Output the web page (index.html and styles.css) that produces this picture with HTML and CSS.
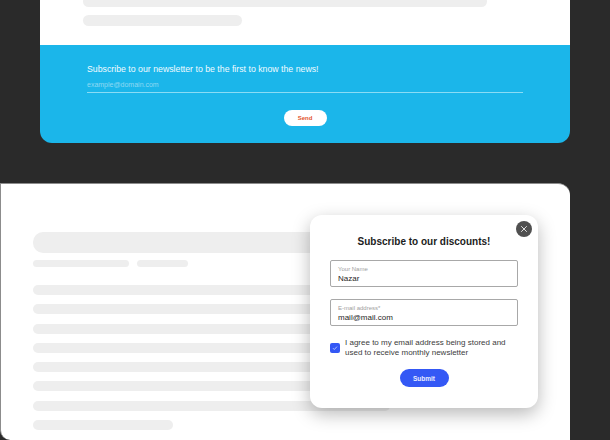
FILE: index.html
```html
<!DOCTYPE html>
<html lang="en">
<head>
    <meta charset="UTF-8">
    <title>Newsletter forms</title>
    <link rel="stylesheet" href="styles.css">
</head>
<body>

<div class="card-top">
    <div class="article-end">
        <div class="bar bar-long"></div>
        <div class="bar bar-short"></div>
    </div>
    <div class="newsletter">
        <p class="newsletter-text">Subscribe to our newsletter to be the first to know the news!</p>
        <div class="newsletter-input">example@domain.com</div>
        <button class="send-button">Send</button>
    </div>
</div>

<div class="card-bottom">
    <div class="hero-bar"></div>
    <div class="meta">
        <div class="meta-bar meta-first"></div>
        <div class="meta-bar meta-second"></div>
    </div>
    <div class="lines">
        <div class="line"></div>
        <div class="line"></div>
        <div class="line"></div>
        <div class="line"></div>
        <div class="line"></div>
        <div class="line"></div>
        <div class="line"></div>
        <div class="line line-last"></div>
    </div>

    <div class="popup">
        <div class="popup-close">
            <svg width="10" height="10" viewBox="0 0 10 10"><path d="M2.2 2.2l5.6 5.6M7.8 2.2l-5.6 5.6" stroke="#e0e0e0" stroke-width="1" fill="none"/></svg>
        </div>
        <h2>Subscribe to our discounts!</h2>
        <div class="field">
            <span class="field-label">Your Name</span>
            <span class="field-value">Nazar</span>
        </div>
        <div class="field">
            <span class="field-label">E-mail address*</span>
            <span class="field-value">mail@mail.com</span>
        </div>
        <div class="agree">
            <div class="checkbox">
                <svg width="6" height="6" viewBox="0 0 6 6"><path d="M1 3.2l1.3 1.3L5 1.6" stroke="#cfd8ff" stroke-width="0.8" fill="none"/></svg>
            </div>
            <p>I agree to my email address being stored and used to receive monthly newsletter</p>
        </div>
        <button class="submit-button">Submit</button>
    </div>
</div>

</body>
</html>
```

FILE: styles.css
```css
html, body {
    height: 440px;
}
body {
    margin: 0;
    overflow: hidden;
    background-color: #2a2a2a;
    font-family: "Liberation Sans", Arial, sans-serif;
}
.card-top {
    width: 530px;
    margin-left: 40px;
}
.article-end {
    height: 45px;
    padding-left: 43px;
    background: white;
    overflow: hidden;
}
.bar {
    height: 11px;
    background: #eeeeee;
    border-radius: 6px;
}
.bar-long {
    width: 404px;
    margin-top: -4px;
}
.bar-short {
    width: 159px;
    margin-top: 8px;
}
.newsletter {
    height: 98px;
    padding: 19px 47px 0;
    box-sizing: border-box;
    background: #1bb6ea;
    border-radius: 0 0 12px 12px;
    text-align: center;
}
.newsletter-text {
    margin: 0;
    color: #f2fbff;
    font-size: 8.75px;
    line-height: 11px;
    text-align: left;
}
.newsletter-input {
    height: 12px;
    margin-top: 5px;
    border-bottom: 1px solid #8adcf5;
    color: #8fd9f3;
    font-size: 7px;
    line-height: 10px;
    text-align: left;
}
.send-button {
    display: block;
    width: 43px;
    height: 16px;
    margin: 17px auto 0;
    padding: 0;
    border: none;
    border-radius: 8px;
    background: white;
    color: #e2552e;
    font-family: inherit;
    font-size: 6px;
    font-weight: bold;
}
.card-bottom {
    position: relative;
    width: 570px;
    height: 257px;
    margin-top: 40px;
    padding: 48px 0 0 33px;
    box-sizing: border-box;
    background: white;
    border-top: 1px solid #8c8c8c;
    border-left: 1px solid #8c8c8c;
    border-radius: 0 12px 0 10px;
}
.hero-bar {
    width: 357px;
    height: 21px;
    margin-left: -1px;
    background: #eeeeee;
    border-radius: 10px;
}
.meta {
    display: flex;
    gap: 8px;
    margin: 7px 0 0 -1px;
}
.meta-bar {
    height: 7px;
    background: #eeeeee;
    border-radius: 4px;
}
.meta-first {
    width: 96px;
}
.meta-second {
    width: 51px;
}
.lines {
    display: flex;
    flex-direction: column;
    gap: 9.3px;
    margin: 18px 0 0 -1px;
}
.line {
    width: 357px;
    height: 10px;
    background: #eeeeee;
    border-radius: 5px;
}
.line-last {
    width: 140px;
}
.popup {
    position: absolute;
    left: 309px;
    top: 31px;
    width: 228px;
    height: 193px;
    padding: 21px 20px 0;
    box-sizing: border-box;
    background: white;
    border-radius: 12px;
    box-shadow: 0 6px 18px rgba(0, 0, 0, 0.28);
}
.popup-close {
    position: absolute;
    top: 6px;
    right: 6px;
    display: flex;
    align-items: center;
    justify-content: center;
    width: 16px;
    height: 16px;
    background: #505050;
    border-radius: 50%;
}
.popup h2 {
    margin: 0 0 12px;
    color: #1c1c1c;
    font-size: 10px;
    line-height: 12px;
    text-align: center;
}
.field {
    display: flex;
    flex-direction: column;
    height: 27px;
    margin-bottom: 12px;
    padding: 5px 7px 0;
    box-sizing: border-box;
    border: 1px solid #a8a8a8;
    border-radius: 2px;
}
.field-label {
    color: #a0a0a0;
    font-size: 6px;
    line-height: 7px;
}
.field-value {
    color: #262626;
    font-size: 8px;
    line-height: 11px;
}
.agree {
    display: flex;
    align-items: center;
    gap: 5px;
    margin-top: 12px;
}
.agree p {
    margin: 0;
    color: #3c3c3c;
    font-size: 8px;
    line-height: 10px;
}
.checkbox {
    display: flex;
    align-items: center;
    justify-content: center;
    flex: none;
    width: 10px;
    height: 10px;
    background: #3458f5;
    border-radius: 2px;
}
.submit-button {
    display: block;
    width: 49px;
    height: 18px;
    margin: 11px auto 0;
    padding: 0;
    border: none;
    border-radius: 9px;
    background: #3458f5;
    color: #e8ecff;
    font-family: inherit;
    font-size: 6.5px;
    font-weight: bold;
}
```
